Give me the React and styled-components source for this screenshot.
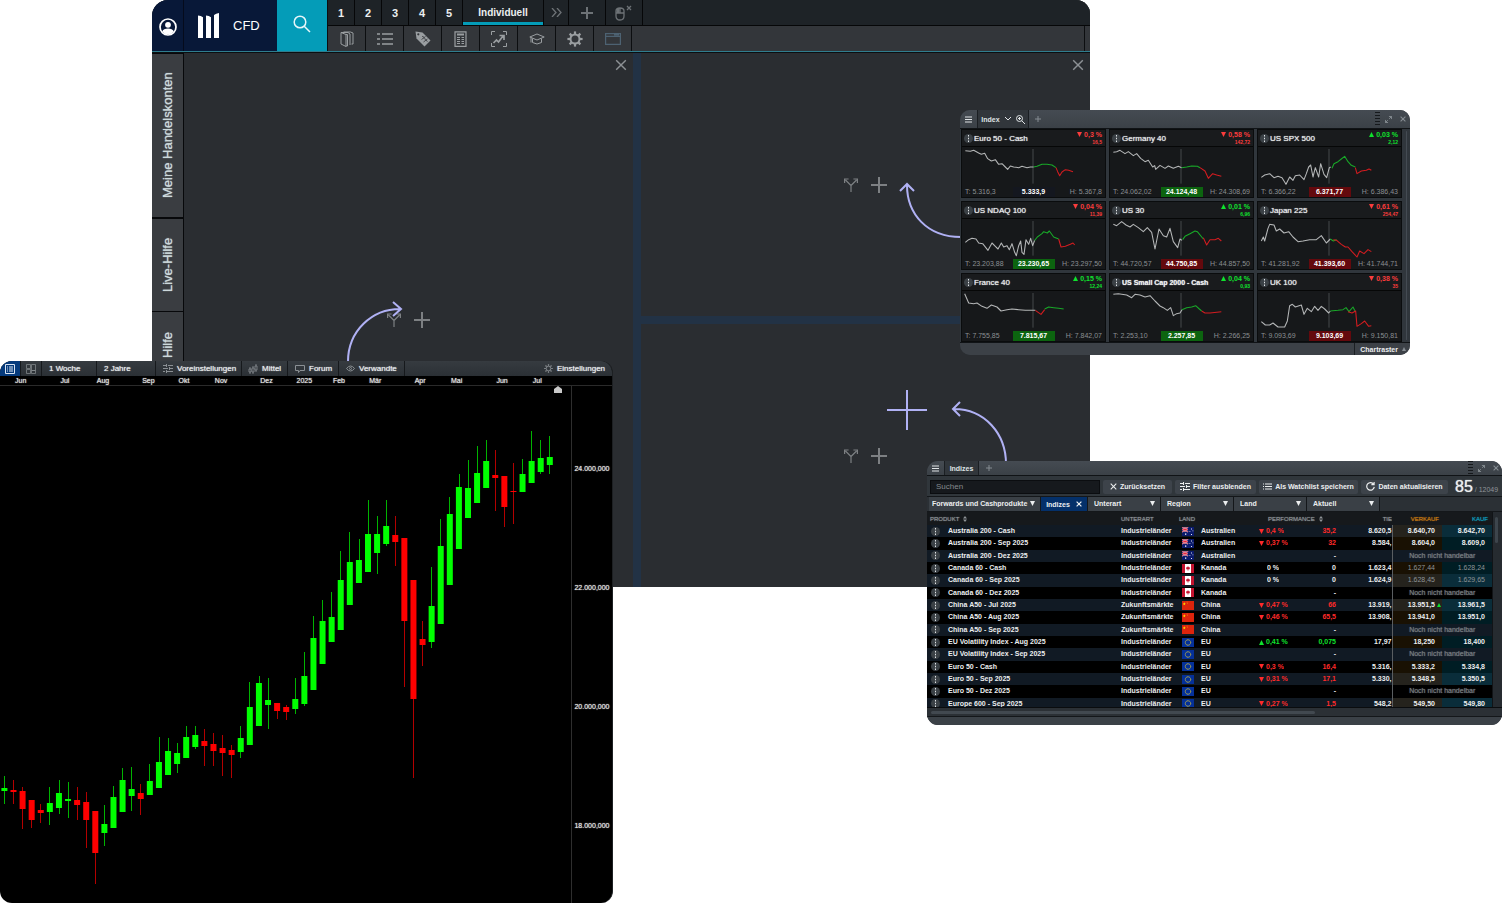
import React from "react";
import styled, { createGlobalStyle, css } from "styled-components";

const Global = createGlobalStyle`
  *, *::before, *::after { box-sizing: border-box; }
  body { margin: 0; background: #fff; font-family: "Liberation Sans", Arial, sans-serif; }
  button, input, select { font: inherit; color: inherit; margin: 0; padding: 0; border: 0; background: none; }
  button { cursor: pointer; }
  svg { display: block; flex: none; }
  a { color: inherit; text-decoration: none; }
`;

const soft = css`text-shadow: 0 0 1px currentColor;`;

const Desktop = styled.main`
  position: relative;
  min-height: 903px;
  min-width: 1200px;
  overflow: hidden;
`;

/* ---------- platform window ---------- */

const Platform = styled.section`
  position: absolute;
  top: 0;
  left: 152px;
  right: 412px;
  height: 587px;
  display: flex;
  flex-direction: column;
  overflow: hidden;
  border-radius: 16px 14px 0 0;
  background: #2a2d31;
`;

const TopBar = styled.header`
  display: flex;
  height: 53px;
  flex: none;
  background: #33363a;
  border-bottom: 1px solid #0c0e10;
  box-shadow: inset 0 -1px 0 #2f7d8e;
  padding-bottom: 1px;
`;

const Account = styled.button`
  width: 32px;
  display: grid;
  place-items: center;
  background: #081838;
  color: #fff;
  border-right: 1px solid #050b1c;
  padding-top: 3px;
`;

const Brand = styled.a`
  width: 93px;
  display: flex;
  align-items: center;
  gap: 14px;
  padding-left: 14px;
  background: #081838;
  color: #fff;
  font-size: 13px;
`;

const SearchButton = styled.button`
  width: 50px;
  display: grid;
  place-items: center;
  padding-bottom: 4px;
  background: #049cb8;
  color: #e6f6f9;
`;

const Bars = styled.div`
  flex: 1;
  min-width: 0;
  display: flex;
  flex-direction: column;
  border-left: 1px solid #0c0e10;
`;

const TabRow = styled.nav`
  display: flex;
  height: 26px;
  background: #1e2327;
  border-bottom: 1px solid #060708;
`;

const Tab = styled.button`
  width: ${(p) => p.$w}px;
  display: grid;
  place-items: center;
  font-size: ${(p) => (p.$active ? 10 : 11)}px;
  font-weight: 700;
  color: ${(p) => (p.$muted ? "#6d7276" : "#eceff0")};
  border-right: 1px solid #060708;
  box-shadow: ${(p) => (p.$active ? "inset 0 -3px 0 #049cb8" : "none")};
`;

const ToolRow = styled.div`
  display: flex;
  height: 25px;
  margin-right: 5px;
  border-right: 1px solid #0c0e10;
`;

const Tool = styled.button`
  width: 38px;
  display: grid;
  place-items: center;
  color: ${(p) => (p.$dim ? "#4d6272" : "#9a9ea1")};
  border-right: 1px solid #0c0e10;
`;

const Work = styled.div`
  flex: 1;
  display: flex;
  min-height: 0;
`;

const Rail = styled.nav`
  width: 32px;
  flex: none;
  display: flex;
  flex-direction: column;
  background: #3a3d41;
  border-right: 1px solid #07080a;
`;

const RailTab = styled.button`
  height: ${(p) => p.$h}px;
  writing-mode: vertical-rl;
  transform: rotate(180deg);
  font-size: 13px;
  color: #cdd9dc;
  text-align: ${(p) => (p.$end ? "right" : "center")};
  border-bottom: ${(p) => (p.$end ? "0" : "1px solid #07080a")};
  border-top: 1px solid #07080a;
  padding-bottom: ${(p) => (p.$end ? 20 : 0)}px;
  ${soft}
`;

const Panes = styled.div`
  flex: 1;
  display: grid;
  grid-template-columns: 1fr 8px 1fr;
  grid-template-rows: 1fr 8px 1fr;
  background: #223245;
`;

const Pane = styled.div`
  position: relative;
  display: flex;
  align-items: center;
  justify-content: center;
  gap: 13px;
  background: #2a2d31;
  color: #7d8083;
  grid-column: ${(p) => p.$col};
  grid-row: ${(p) => p.$row};
`;

const PaneButton = styled.button`
  display: grid;
  place-items: center;
`;

const PaneClose = styled.button`
  position: absolute;
  top: 6px;
  right: 6px;
  color: #8d9195;
`;

const Hint = styled.div`
  position: absolute;
  color: #b0b1f4;
  pointer-events: none;
  ${(p) => p.$place};
`;

/* ---------- shared floating-window parts ---------- */

const Caption = styled.header`
  display: flex;
  align-items: stretch;
  height: ${(p) => p.$h}px;
  flex: none;
  background: linear-gradient(#454b52, #3b4147);
  border-bottom: 1px solid #101316;
  color: #e8ebed;
  font-size: 7px;
  font-weight: 700;
`;

const CaptionButton = styled.button`
  width: ${(p) => p.$w || 20}px;
  display: flex;
  align-items: center;
  justify-content: center;
  gap: 5px;
  color: ${(p) => (p.$muted ? "#858c92" : "#dfe3e5")};
  background: ${(p) => (p.$on ? "#31363b" : "transparent")};
  border-right: ${(p) => (p.$line ? "1px solid #1b1f23" : "0")};
`;

const Push = styled.span`
  margin-left: auto;
`;

const Grip = styled.span`
  width: 5px;
  height: 14px;
  align-self: center;
  background: repeating-linear-gradient(#16191c 0 1px, transparent 1px 3px);
`;

const Dots = styled.button`
  width: 9px;
  height: 9px;
  flex: none;
  display: grid;
  place-items: center;
  border-radius: 50%;
  background: #3b4146;
  color: #dfe3e5;
`;

/* ---------- candle chart window ---------- */

const ChartWindow = styled.section`
  position: absolute;
  left: 0;
  top: 361px;
  width: 613px;
  display: flex;
  flex-direction: column;
  overflow: hidden;
  border-radius: 12px;
  background: #000;
  border-right: 1px solid #1d2023;
`;

const ChartBar = styled.div`
  display: flex;
  height: 15px;
  background: linear-gradient(#363b40, #2b3035);
  color: #e9ecee;
  font-size: 8px;
`;

const ChartButton = styled.button`
  width: ${(p) => p.$w}px;
  display: flex;
  align-items: center;
  gap: 4px;
  padding-left: ${(p) => p.$pad || 6}px;
  background: ${(p) => (p.$on ? "#053a7c" : "transparent")};
  border-right: ${(p) => (p.$last ? "0" : "1px solid #16191c")};
  margin-left: ${(p) => (p.$last ? "auto" : "0")};
  white-space: nowrap;
  ${soft}
  svg { color: ${(p) => (p.$on ? "#d9e4f2" : "#8b9094")}; }
`;

const Months = styled.div`
  display: flex;
  height: 10px;
  padding: 0 52px 0 15px;
  border-bottom: 1px solid #2a2a2a;
  color: #e4e4e4;
  font-size: 7px;
  line-height: 9px;
`;

const Month = styled.span`
  flex: ${(p) => p.$weeks} 0 0;
  min-width: 0;
  ${soft}
`;

const Plot = styled.div`
  display: flex;
  height: 517px;
`;

const Prices = styled.div`
  flex: 1;
  padding-top: 23px;
  border-left: 1px solid #2e2e2e;
  color: #e4e4e4;
  font-size: 7px;
  line-height: 119px;
  text-align: center;
  ${soft}
`;

/* ---------- index grid window ---------- */

const IndexWindow = styled.section`
  position: absolute;
  right: 92px;
  top: 110px;
  width: 450px;
  display: flex;
  flex-direction: column;
  overflow: hidden;
  border-radius: 10px;
  background: #30363c;
`;

const Tiles = styled.div`
  display: grid;
  grid-template-columns: repeat(3, 1fr);
  gap: 3px;
  padding: 0 4px 0 1px;
  flex: 1;
`;

const TilesScroll = styled.div`
  display: flex;
  border-bottom: 1px solid #101316;
  padding-right: 3px;
`;

const ScrollTrack = styled.span`
  width: 3px;
  margin: 2px 0;
  border-radius: 2px;
  background: #444b53;
`;

const Tile = styled.article`
  display: flex;
  flex-direction: column;
  height: 69px;
  background: #16181a;
  border: 1px solid #0a0c0d;
`;

const TileHead = styled.div`
  display: flex;
  align-items: center;
  height: 17px;
  gap: 1px;
  padding: 0 3px 0 2px;
  background: #191b1d;
  border-bottom: 1px solid #060707;
`;

const TileName = styled.h3`
  margin: 0;
  font-size: ${(p) => (p.$long ? 7 : 8)}px;
  font-weight: ${(p) => (p.$long ? 700 : 400)};
  color: #eceeef;
  white-space: nowrap;
  ${soft}
`;

const Change = styled.div`
  margin-left: auto;
  text-align: right;
  font-weight: 700;
  font-size: 7px;
  line-height: 8px;
  color: ${(p) => (p.$up ? "#0fe22d" : "#fb3c3c")};
  white-space: nowrap;
  small { display: block; font-size: 5px; line-height: 6px; }
  svg { display: inline-block; }
`;

const TileFoot = styled.div`
  display: grid;
  grid-template-columns: 1fr 42px 1fr;
  height: 10px;
  line-height: 10px;
  padding: 0 3px;
  font-size: 7px;
  color: #8b8f92;
  white-space: nowrap;
  span:last-child { display: flex; justify-content: flex-end; }
`;

const Price = styled.button`
  color: #fff;
  font-weight: 700;
  line-height: 10px;
  background: ${(p) => ({ flat: "#14171f", up: "#0c640f", down: "#64090d" })[p.$tone]};
`;

const IndexFoot = styled.footer`
  display: flex;
  justify-content: flex-end;
  height: 12px;
  background: #3c4147;
  color: #eceeef;
  font-size: 7px;
  font-weight: 700;
`;

const FootButton = styled.button`
  display: flex;
  align-items: center;
  gap: 4px;
  padding: 0 4px 0 5px;
  border-left: 1px solid #1b1f23;
  svg { color: #858c92; }
`;

/* ---------- product table window ---------- */

const TableWindow = styled.section`
  position: absolute;
  right: 0;
  top: 461px;
  width: 575px;
  display: flex;
  flex-direction: column;
  overflow: hidden;
  border-radius: 11px;
  background: #30363b;
  color: #eceeef;
  font-size: 7px;
  font-weight: 700;
`;

const SearchRow = styled.div`
  display: flex;
  align-items: center;
  gap: 3px;
  height: 20px;
  padding: 1px 3px 0;
`;

const SearchInput = styled.input`
  flex: 1;
  min-width: 0;
  height: 14px;
  padding: 0 5px;
  background: #16191d;
  border: 1px solid #0b0d10;
  font-size: 8px;
  font-weight: 400;
  &::placeholder { color: #858a8e; opacity: 1; }
`;

const Action = styled.button`
  display: flex;
  align-items: center;
  justify-content: center;
  gap: 3px;
  width: ${(p) => p.$w}px;
  height: 14px;
  border-radius: 2px;
  background: #3d434a;
  white-space: nowrap;
`;

const Count = styled.p`
  width: 48px;
  margin: 0;
  padding-left: 4px;
  font-weight: 400;
  white-space: nowrap;
  strong { font-size: 16px; font-weight: 400; line-height: 16px; ${soft} }
  span { color: #8f9498; }
`;

const FilterRow = styled.div`
  display: flex;
  height: 16px;
  padding-left: 2px;
  background: #2b3035;
  border-top: 1px solid #14171a;
  border-bottom: 1px solid #14171a;
`;

const Filter = styled.label`
  position: relative;
  width: ${(p) => p.$w}px;
  display: flex;
  align-items: center;
  background: #3a4046;
  border-right: 1px solid #14171a;
  select {
    width: 100%;
    height: 13px;
    padding-left: ${(p) => p.$pad}px;
    padding-bottom: 1px;
    appearance: none;
    outline: 0;
  }
  svg { position: absolute; right: 5px; top: 4px; pointer-events: none; }
`;

const FilterChip = styled.button`
  width: 47px;
  display: flex;
  align-items: center;
  justify-content: center;
  gap: 6px;
  background: #04306a;
  border-right: 1px solid #14171a;
`;

const TableScroll = styled.div`
  display: flex;
  height: 196px;
  overflow: hidden;
  background: #1e2226;
  border-bottom: 1px solid #0a0c0e;
`;

const TableClip = styled.div`
  flex: 1;
  overflow: hidden;
`;

const Table = styled.table`
  width: 100%;
  height: 198px;
  table-layout: fixed;
  border-collapse: collapse;
  line-height: 8px;
  white-space: nowrap;

  th {
    height: 13px;
    padding: 0;
    background: #16191c;
    color: #8d9296;
    font-size: 6px;
    font-weight: 400;
    text-align: left;
    ${soft}
  }
  td { padding: 0; }
  tbody tr:nth-child(odd) { background: #111a24; }
  tbody tr:nth-child(even) { background: #000; }
`;

const Col = styled.col`
  width: ${(p) => p.$w}px;
`;

const Cell = styled.div`
  display: flex;
  align-items: center;
  justify-content: ${(p) => p.$justify || "flex-start"};
  gap: ${(p) => p.$gap || 0}px;
  padding: 0 ${(p) => p.$r || 0}px 0 ${(p) => p.$l || 0}px;
  color: ${(p) => p.$color || "inherit"};
  font-weight: ${(p) => (p.$thin ? 400 : 700)};
  overflow: hidden;
`;

const Sell = styled.td`
  background: rgba(90, 60, 10, 0.28);
  border-left: 1px solid #5a5e61;
`;

const Buy = styled.td`
  background: rgba(0, 75, 95, 0.38);
`;

const Closed = styled.td`
  border-left: 1px solid #5a5e61;
  text-align: center;
  color: #777c80;
  font-weight: 400;
  font-size: 7px;
  ${soft}
`;

const VBar = styled.div`
  width: 10px;
  padding: 5px 2px;
  background: #262b30;
  border-left: 1px solid #111417;
  &::before { content: ""; display: block; height: 26px; width: 3px; border-radius: 2px; background: #3d454c; }
`;

const HBar = styled.div`
  height: 9px;
  padding: 3px 4px;
  background: #2b3035;
  border-bottom: 1px solid #14171a;
  &::before { content: ""; display: block; width: 384px; height: 3px; border-radius: 2px; background: #424950; }
`;

const TableFoot = styled.footer`
  height: 8px;
  background: #3b4147;
`;

/* ---------- icons ---------- */

const Icon = ({ w = 16, h = w, vb, sw = 1, children }) => (
  <svg width={w} height={h} viewBox={vb || `0 0 ${w} ${h}`} fill="none" stroke="currentColor" strokeWidth={sw} aria-hidden="true">
    {children}
  </svg>
);

const Cross = ({ size = 10, sw = 1 }) => (
  <Icon w={size} vb="0 0 10 10" sw={sw}><path d="M1 1l8 8M9 1l-8 8" /></Icon>
);
const Plus = ({ size = 16, sw = 2 }) => (
  <Icon w={size} sw={sw}><path d={`M${size / 2} 0V${size}M0 ${size / 2}H${size}`} /></Icon>
);
const Fork = () => (
  <Icon w={14} h={14} sw={1.2}>
    <path d="M7 14V7.500L1.500 2M7 7.500L12.500 2M.6 5V1H4.600M9.400 1h4v4" />
  </Icon>
);
const Burger = ({ size = 7 }) => (
  <Icon w={size} vb="0 0 7 7"><path d="M0 1h7M0 3.500h7M0 6h7" /></Icon>
);
const Tri = ({ up, w = 5, h = 5 }) => (
  <svg width={w} height={h} viewBox="0 0 6 6" fill="currentColor" aria-hidden="true">
    <path d={up ? "M3 0L6 6H0Z" : "M0 0H6L3 6Z"} />
  </svg>
);
const DotsIcon = () => (
  <svg width="3" height="7" viewBox="0 0 3 7" fill="currentColor" aria-hidden="true">
    <path d="M1 0h1v1.500H1zM1 2.800h1v1.400H1zM1 5.500h1V7H1z" />
  </svg>
);
const Sliders = ({ w = 10 }) => (
  <Icon w={w} h={9} vb="0 0 10 9"><path d="M0 1.500h3M5 1.500h5M0 4.500h5M7 4.500h3M0 7.500h2M4 7.500h6M3.500 0v3M6.500 3v3M3.500 6v3" /></Icon>
);
const Expand = () => (
  <Icon w={7} vb="0 0 8 8" sw={1.1}><path d="M4.800 3.200L7.500.5M4.500 .5h3V3.500M3.200 4.800L.5 7.500M.5 4.500v3h3" /></Icon>
);
const Sort = () => (
  <svg width="4" height="6" viewBox="0 0 4 6" fill="currentColor" aria-hidden="true"><path d="M2 0l2 2.500H0zM2 6l2-2.500H0z" /></svg>
);
const Gear = ({ w = 16, teeth = 8, r = 5, sw = 1.6 }) => (
  <Icon w={w} vb="0 0 16 16" sw={sw}>
    <circle cx="8" cy="8" r={r} />
    {Array.from({ length: teeth }, (_, i) => (
      <path key={i} d="M8 3.200V.4" strokeWidth="2.200" transform={`rotate(${(i * 360) / teeth} 8 8)`} />
    ))}
  </Icon>
);

const toolIcons = [
  ["Produkte", <Icon w={14} h={16}><path d="M1 1.500l5 2v12l-5-2.500zM1 1.500h7l2 1.500v11M3.500 1h7l2.500 1v11h-1.500M6 3.500h1.500v11.500H6" /></Icon>],
  ["Listen", <Icon w={16} h={14} sw={1.500}><path d="M5 2h11M5 7h11M5 12h11M0 2h3M0 7h3M0 12h3" /></Icon>],
  ["Preise", <svg width="16" height="16" viewBox="0 0 16 16" aria-hidden="true"><path fill="currentColor" d="M.5.5l7 1 8 8-6 6-8-8z" /><circle cx="3.300" cy="3.300" r="1.100" fill="#33363a" /><path d="M7 5.500c3-.5 1 2.500 3 2.500s1 2.500 2.500 2.500M6.500 8.500l4-3M8.500 11l4-3" stroke="#33363a" strokeWidth=".8" fill="none" /></svg>],
  ["Berichte", <Icon w={13} h={16} sw={1.200}><path d="M1 .8h11v14.500H1zM3 6.500h3M7.500 6.500H10M3 8.500h3M7.500 8.500H10M3 10.500h3M7.500 10.500H10M3 12.500h3M7.500 12.500H10" /><path d="M3 3.500h7" strokeWidth="2" /></Icon>],
  ["Charts", <Icon w={16}><path d="M.5 4V.5H4M12 .5h3.500V4M15.500 12v3.500H12M4 15.500H.5V12" /><path d="M2.500 12l3-3 2 2L12 5M8.500 4.500H13V9" strokeWidth="1.700" /></Icon>],
  ["Wissen", <Icon w={16} h={12}><path d="M8 1L.8 4 8 7l7.200-3zM3.500 5.500v4q4.500 3 9 0v-4M2 4.500v5" /></Icon>],
  ["Einstellungen", <Gear r={4.5} sw={2} />],
  ["Fenster", <Icon w={16} h={12} sw={1.200}><path d="M.6.6h14.800v10.800H.6zM.6 3.300h14.800M9 1.800h5" /></Icon>],
];

/* ---------- data ---------- */

const months = [
  ["Jun", 5], ["Jul", 4], ["Aug", 5], ["Sep", 4], ["Okt", 4], ["Nov", 5], ["Dez", 4],
  ["2025", 4], ["Feb", 4], ["Mär", 5], ["Apr", 4], ["Mai", 5], ["Jun", 4], ["Jul", 3],
];

/* rising flag, high, body top, body bottom, low */
const candles = [
  [1, 390, 402, 405, 418], [0, 394, 404, 406, 418], [0, 401, 405, 423, 443], [0, 414, 414, 434, 442],
  [0, 418, 424, 427, 437], [1, 401, 417, 426, 439], [1, 394, 407, 422, 428], [1, 396, 413, 415, 432],
  [0, 401, 414, 419, 434], [0, 406, 416, 434, 462], [0, 425, 425, 467, 498], [1, 419, 438, 447, 460],
  [1, 400, 411, 442, 442], [1, 382, 394, 426, 426], [1, 381, 403, 410, 425], [0, 398, 407, 413, 429],
  [1, 378, 395, 409, 409], [1, 351, 376, 402, 402], [1, 352, 365, 389, 389], [1, 357, 367, 378, 387],
  [1, 340, 351, 372, 372], [1, 340, 349, 361, 363], [0, 343, 355, 360, 380], [0, 347, 358, 365, 380],
  [0, 349, 362, 367, 390], [0, 359, 364, 369, 392], [1, 340, 352, 366, 372], [1, 296, 321, 359, 359],
  [1, 290, 297, 340, 340], [1, 292, 314, 319, 343], [0, 317, 317, 325, 333], [0, 319, 321, 326, 334],
  [1, 292, 313, 323, 328], [1, 266, 290, 318, 320], [1, 230, 252, 304, 304], [1, 214, 235, 278, 278],
  [1, 206, 231, 256, 256], [1, 165, 194, 244, 244], [1, 146, 176, 219, 219], [1, 153, 174, 197, 197],
  [1, 114, 148, 186, 186], [1, 130, 148, 167, 188], [1, 114, 140, 158, 160], [0, 130, 149, 156, 180],
  [0, 152, 152, 235, 301], [0, 194, 194, 313, 392], [0, 235, 253, 259, 280], [1, 181, 220, 256, 262],
  [1, 133, 160, 238, 238], [1, 111, 128, 199, 199], [1, 88, 101, 163, 163], [1, 74, 102, 132, 132],
  [1, 60, 87, 117, 117], [1, 54, 75, 102, 102], [0, 64, 89, 92, 125], [0, 90, 90, 121, 141],
  [0, 77, 105, 106, 138], [1, 73, 88, 106, 106], [1, 45, 75, 97, 97], [1, 54, 72, 86, 88], [1, 50, 71, 79, 88],
];

const tiles = [
  { name: "Euro 50 - Cash", pct: "0,3 %", abs: "16,5", low: "5.316,3", price: "5.333,9", high: "5.367,8", tone: "flat",
    lines: ["10,11 25,13 35,10 50,18 58,22 68,19 77,35 88,42 100,38 110,52 120,50 130,60 137,67 145,57 155,60 170,62 180,58 195,62 205,60 215,60", "215,60 225,58 240,52 255,52 270,54 282,62", "282,62 287,74 293,86 300,75 310,68 320,70 333,74"] },
  { name: "Germany 40", pct: "0,58 %", abs: "142,72", low: "24.062,02", price: "24.124,48", high: "24.308,69", tone: "up",
    lines: ["10,16 20,14 30,10 45,20 55,14 70,26 80,20 92,34 105,44 115,40 128,60 134,56 137,67 150,55 165,64 175,57 190,64 205,58 215,62", "215,62 230,60 245,57 262,58 270,62", "270,62 285,72 295,94 308,80 320,84 334,88"] },
  { name: "US SPX 500", up: 1, pct: "0,03 %", abs: "2,12", low: "6.366,22", price: "6.371,77", high: "6.386,43", tone: "down",
    lines: ["10,91 20,84 35,80 48,92 60,88 72,92 84,112 95,90 105,100 112,86 125,84 138,98 145,80 152,60 158,54 165,90 172,62 182,90 188,50 198,82 206,92 214,62 218,60", "222,64 228,50 240,44 250,36 260,28 270,44 280,55 292,60", "292,62 297,80 310,72 325,70 333,66 340,70"] },
  { name: "US NDAQ 100", pct: "0,04 %", abs: "11,39", low: "23.203,88", price: "23.230,65", high: "23.297,50", tone: "up",
    lines: ["10,70 20,62 30,58 42,60 50,72 62,74 78,94 90,72 100,82 108,90 118,72 125,84 135,80 142,92 150,74 158,100 163,110 170,80 176,66 180,100 186,106 192,62 200,76 206,58 212,80 218,64", "218,64 226,54 240,44 245,38 256,42 262,36 275,54 290,60", "290,60 297,84 310,82 325,76 333,72 338,78"] },
  { name: "US 30", up: 1, pct: "0,01 %", abs: "6,96", low: "44.720,57", price: "44.750,85", high: "44.857,50", tone: "down",
    lines: ["10,16 20,20 35,8 48,18 60,24 70,16 85,26 100,38 112,26 125,40 135,90 147,30 160,50 170,54 180,28 190,68 203,86 210,60 216,64", "218,62 225,52 240,44 255,36 262,38 280,60", "280,56 290,78 300,62 315,62 325,58 334,66"] },
  { name: "Japan 225", pct: "0,61 %", abs: "254,47", low: "41.281,92", price: "41.393,60", high: "41.744,71", tone: "down",
    lines: ["10,66 16,54 20,66 30,28 35,16 48,18 55,36 65,30 78,42 92,38 105,54 120,68 135,66 155,62 175,62 190,50 205,72 217,60", "217,60 226,66 236,62", "226,62 236,64 250,76 262,84 270,84 282,98 297,114 305,96 318,104 330,92 340,98"] },
  { name: "France 40", up: 1, pct: "0,15 %", abs: "12,24", low: "7.755,85", price: "7.815,67", high: "7.842,07", tone: "up",
    lines: ["8,8 20,36 35,38 45,36 60,46 75,52 88,42 105,48 117,60 135,56 150,54 170,56 190,58 210,58 220,58", "248,54 260,48 275,50 290,52 305,54", "220,58 237,70 248,56"] },
  { name: "US Small Cap 2000 - Cash", long: 1, up: 1, pct: "0,04 %", abs: "0,93", low: "2.253,10", price: "2.257,85", high: "2.266,25", tone: "up",
    lines: ["10,10 25,8 50,12 65,20 75,10 90,12 105,18 120,14 135,30 150,45 160,50 172,58 182,50 190,74 200,68 210,66 216,56", "216,56 230,50 245,48 257,44 268,54 275,60", "275,60 285,66 300,66 334,62"] },
  { name: "UK 100", pct: "0,38 %", abs: "35", low: "9.093,69", price: "9.103,69", high: "9.150,81", tone: "down",
    lines: ["10,92 22,102 35,102 45,96 60,108 80,108 88,90 95,44 103,40 112,48 130,42 138,70 148,52 160,62 170,46 180,58 190,46 200,54 212,66 217,60", "217,60 240,58 255,56 264,50 273,62 285,48 291,60", "270,62 282,66 293,60 297,106 310,98 320,90 332,106 340,104"] },
];

const IND = "Industrieländer";
const ZUK = "Zukunftsmärkte";
/* product, category, country, change %, change, low, sell, buy, direction */
const products = [
  ["Australia 200 - Cash", IND, "Australien", "0,4 %", "35,2", "8.620,5", "8.640,70", "8.642,70", -1],
  ["Australia 200 - Sep 2025", IND, "Australien", "0,37 %", "32", "8.584,", "8.604,0", "8.609,0", -1],
  ["Australia 200 - Dez 2025", IND, "Australien"],
  ["Canada 60 - Cash", IND, "Kanada", "0 %", "0", "1.623,4", "1.627,44", "1.628,24", 0],
  ["Canada 60 - Sep 2025", IND, "Kanada", "0 %", "0", "1.624,9", "1.628,45", "1.629,65", 0],
  ["Canada 60 - Dez 2025", IND, "Kanada"],
  ["China A50 - Jul 2025", ZUK, "China", "0,47 %", "66", "13.919,", "13.951,5", "13.961,5", -1],
  ["China A50 - Aug 2025", ZUK, "China", "0,46 %", "65,5", "13.908,", "13.941,0", "13.951,0", -1],
  ["China A50 - Sep 2025", ZUK, "China"],
  ["EU Volatility Index - Aug 2025", IND, "EU", "0,41 %", "0,075", "17,97", "18,250", "18,400", 1],
  ["EU Volatility Index - Sep 2025", IND, "EU"],
  ["Euro 50 - Cash", IND, "EU", "0,3 %", "16,4", "5.316,", "5.333,2", "5.334,8", -1],
  ["Euro 50 - Sep 2025", IND, "EU", "0,31 %", "17,1", "5.330,", "5.348,5", "5.350,5", -1],
  ["Euro 50 - Dez 2025", IND, "EU"],
  ["Europe 600 - Sep 2025", IND, "EU", "0,27 %", "1,5", "548,2", "549,50", "549,80", -1],
];

const flagArt = {
  Australien: (
    <>
      <path fill="#0a1a6c" d="M0 0h12v9H0z" />
      <path stroke="#fff" strokeWidth="1.200" d="M0 0l6 5M6 0L0 5M3 0v5M0 2.500h6" />
      <path stroke="#e0243b" strokeWidth=".8" d="M0 0l6 5M6 0L0 5M3 0v5M0 2.500h6" />
      <path fill="#fff" d="M3 6.500h1.300v1.300H3zM9 1.500h.9v.9H9zM7.500 4h.8v.8h-.8zM10.500 3.500h.8v.8h-.8zM9 7h.9v.9H9z" />
    </>
  ),
  Kanada: (
    <>
      <path fill="#fff" d="M0 0h12v9H0z" />
      <path fill="#c4132f" d="M0 0h3v9H0zM9 0h3v9H9zM6 2l.7 1.200L8 3.500 7.600 5.200 6.200 5.600V7h-.4V5.600L4.400 5.200 4 3.500l1.300-.3z" />
    </>
  ),
  China: (
    <>
      <path fill="#dc240c" d="M0 0h12v9H0z" />
      <path fill="#ffd100" d="M2.300 1.200l.5 1 1 .2-.8.700.2 1.100-.9-.5-.9.500.2-1.100-.8-.7 1-.2zM4.800.8h.6v.6h-.6zM5.300 2.500h.6v.6h-.6z" />
    </>
  ),
  EU: (
    <>
      <path fill="#043099" d="M0 0h12v9H0z" />
      <circle cx="6" cy="4.500" r="2.700" fill="none" stroke="#e6cf2e" strokeWidth=".9" strokeDasharray="1 .41" />
    </>
  ),
};
const Flag = ({ of }) => <svg width="12" height="9" viewBox="0 0 12 9" aria-hidden="true">{flagArt[of]}</svg>;

/* ---------- windows ---------- */

function EmptyPane({ col, row, closable, children }) {
  return (
    <Pane $col={col} $row={row}>
      {closable && <PaneClose aria-label="Bereich schließen"><Cross size={12} sw={1.2} /></PaneClose>}
      <PaneButton aria-label="Bereich teilen"><Fork /></PaneButton>
      <PaneButton aria-label="Fenster hinzufügen"><Plus /></PaneButton>
      {children}
    </Pane>
  );
}

function PlatformWindow() {
  return (
    <Platform>
      <TopBar>
        <Account aria-label="Konto">
          <svg width="18" height="18" viewBox="0 0 18 18" aria-hidden="true">
            <circle cx="9" cy="9" r="8" fill="none" stroke="currentColor" strokeWidth="1.700" />
            <circle cx="9" cy="6.800" r="2.900" fill="currentColor" />
            <path d="M3.200 13.500c1-4 10.600-4 11.600 0A7.500 7.500 0 0 1 3.200 13.500z" fill="currentColor" />
          </svg>
        </Account>
        <Brand href="#cfd">
          <svg width="21" height="25" viewBox="0 0 21 25" fill="currentColor" aria-hidden="true">
            <path d="M0 2.500q3 .2 5 1.700V25H0zM8 2.500q3 .2 5 1.700V25H8zM16 2q2-1.700 5-2v25h-5z" />
          </svg>
          CFD
        </Brand>
        <SearchButton aria-label="Suchen">
          <Icon w={18} sw={1.500}><circle cx="7" cy="7" r="5.800" /><path d="M11.200 11.200L17 17" /></Icon>
        </SearchButton>
        <Bars>
          <TabRow>
            {["1", "2", "3", "4", "5"].map((t) => <Tab key={t} $w={27}>{t}</Tab>)}
            <Tab $w={81} $active>Individuell</Tab>
            <Tab $w={25} $muted aria-label="Mehr"><Icon w={11} h={9} sw={1.3}><path d="M1 0l4 4.500L1 9M6 0l4 4.500L6 9" /></Icon></Tab>
            <Tab $w={37} $muted aria-label="Tab hinzufügen"><Plus size={12} sw={2} /></Tab>
            <Tab $w={37} $muted aria-label="Maus">
              <Icon w={18} h={16} sw={1.300}><path d="M1 8V6q0-3 4-3t4 3v5q0 4-4 4t-4-4V8h8M5 3v5M12 1l4 4M16 1l-4 4" /><path d="M1.500 4h3v4h-3z" fill="currentColor" stroke="none" /></Icon>
            </Tab>
          </TabRow>
          <ToolRow>
            {toolIcons.map(([label, icon]) => <Tool key={label} aria-label={label} $dim={label === "Fenster"}>{icon}</Tool>)}
          </ToolRow>
        </Bars>
      </TopBar>
      <Work>
        <Rail>
          <RailTab $h={165}>Meine Handelskonten</RailTab>
          <RailTab $h={94}>Live-Hilfe</RailTab>
          <RailTab $h={275} $end>Hilfe</RailTab>
        </Rail>
        <Panes>
          <EmptyPane col="1" row="1 / 4" closable>
            <Hint $place="left: calc(50% - 64px); top: calc(50% - 20px)">
              <Icon w={60} h={64} sw={2}><path d="M3 64C2 30 28 9 55 9M48 2l8 7-8 7" /></Icon>
            </Hint>
          </EmptyPane>
          <EmptyPane col="3" row="1" closable>
            <Hint $place="right: 129px; top: 129px">
              <Icon w={62} h={58} sw={2}><path d="M8 3C8 32 28 55 62 55M1 9l7-7 7 7" /></Icon>
            </Hint>
          </EmptyPane>
          <EmptyPane col="3" row="3">
            <Hint $place="right: 163px; top: 66px"><Plus size={40} /></Hint>
            <Hint $place="right: 79px; top: 76px">
              <Icon w={60} h={64} sw={2}><path d="M3 9C34 9 55 34 55 64M9 2L2 9l7 7" /></Icon>
            </Hint>
          </EmptyPane>
        </Panes>
      </Work>
    </Platform>
  );
}

function CandleChart() {
  return (
    <ChartWindow>
      <ChartBar>
        <ChartButton $w={21} $pad={5} $on aria-label="Einzelansicht"><Icon w={10}><path d="M.5.5h9v9h-9zM2 3h1M4 3h4M2 5h1M4 5h4M2 7h1M4 7h4" /></Icon></ChartButton>
        <ChartButton $w={21} $pad={5} aria-label="Rasteransicht"><Icon w={10}><path d="M.5.5h4v4h-4zM5.500.5h4v6h-4zM.5 5.500h4v4h-4zM5.500 6.500h4v3h-4z" strokeWidth=".7" /></Icon></ChartButton>
        <ChartButton $w={55} $pad={7}>1 Woche</ChartButton>
        <ChartButton $w={59} $pad={7}>2 Jahre</ChartButton>
        <ChartButton $w={86} $pad={7}><Sliders />Voreinstellungen</ChartButton>
        <ChartButton $w={46}><Icon w={10}><path d="M1 5h2v3H1zM4 4h2v4H4zM7 2h2v4H7zM2 3v2M2 8v2M5 2v2M5 8v2M8 0v2M8 6v2" strokeWidth=".8" /></Icon>Mittel</ChartButton>
        <ChartButton $w={51} $pad={7}><Icon w={10} h={8}><path d="M.5.5h9v5H5L3.500 7.500v-2h-3z" /></Icon>Forum</ChartButton>
        <ChartButton $w={66} $pad={7}><Icon w={9} h={7}><path d="M.5 3.500q4-5 8 0-4 5-8 0z" /><circle cx="4.500" cy="3.500" r="1" /></Icon>Verwandte</ChartButton>
        <ChartButton $w={69} $pad={1} $last><Gear w={9} r={4} sw={1.500} />Einstellungen</ChartButton>
      </ChartBar>
      <Months>
        {months.map(([m, weeks], i) => <Month key={i} $weeks={weeks}>{m}</Month>)}
      </Months>
      <Plot>
        <svg width="571" height="517" viewBox="0 0 571 517" role="img" aria-label="Kerzenchart">
          {candles.map(([up, high, top, bottom, low], i) => {
            const x = 4 + i * 9.09;
            return (
              <g key={i} fill={up ? "#00ff00" : "#ff0000"}>
                <rect x={Math.round(x)} y={high} width="1" height={low - high} opacity=".7" />
                <rect x={x - 2.600} y={top} width="6" height={bottom - top} />
              </g>
            );
          })}
          <path d="M554 7V3l4-3 4 3v4z" fill="#c9c9c9" />
        </svg>
        <Prices>
          {["24.000,000", "22.000,000", "20.000,000", "18.000,000"].map((p) => <div key={p}>{p}</div>)}
        </Prices>
      </Plot>
    </ChartWindow>
  );
}

function IndexGrid() {
  return (
    <IndexWindow>
      <Caption $h={19}>
        <CaptionButton $w={18} $line aria-label="Menü"><Burger /></CaptionButton>
        <CaptionButton $w={51} $on $line>Index<Icon w={6} h={4}><path d="M0 0l3 3 3-3" /></Icon><Icon w={9}><circle cx="3.500" cy="3.500" r="3" /><path d="M5.700 5.700L9 9M2 3.500h3M3.500 2v3" /></Icon></CaptionButton>
        <CaptionButton $w={17} $muted aria-label="Tab hinzufügen"><Plus size={6} sw={1} /></CaptionButton>
        <Push />
        <Grip />
        <CaptionButton $w={16} $muted aria-label="Vergrößern"><Expand /></CaptionButton>
        <CaptionButton $w={14} $muted aria-label="Schließen"><Cross size={6} sw={1.800} /></CaptionButton>
      </Caption>
      <TilesScroll>
        <Tiles>
          {tiles.map((t) => (
            <Tile key={t.name}>
              <TileHead>
                <Dots aria-label={`Menü ${t.name}`}><DotsIcon /></Dots>
                <TileName $long={t.long}>{t.name}</TileName>
                <Change $up={t.up}><Tri up={t.up} /> {t.pct}<small>{t.abs}</small></Change>
              </TileHead>
              <svg width="143" height="40" viewBox="0 0 429 120" fill="none" strokeWidth="3.200" strokeLinejoin="round" aria-hidden="true">
                <path d="M213 6v104" stroke="#45484b" strokeWidth="3" />
                <polyline points={t.lines[0]} stroke="#b4b6b7" />
                <polyline points={t.lines[1]} stroke="#18a828" />
                <polyline points={t.lines[2]} stroke="#d31c20" />
              </svg>
              <TileFoot>
                <span>T: {t.low}</span>
                <Price $tone={t.tone}>{t.price}</Price>
                <span>H: {t.high}</span>
              </TileFoot>
            </Tile>
          ))}
        </Tiles>
        <ScrollTrack />
      </TilesScroll>
      <IndexFoot>
        <FootButton>Chartraster<Tri up w={4} h={4} /></FootButton>
      </IndexFoot>
    </IndexWindow>
  );
}

function ProductRow({ data }) {
  const [name, kind, country, pct, abs, low, sell, buy, dir] = data;
  const color = dir === -1 ? "#ff2a2a" : dir === 1 ? "#0fe22d" : undefined;
  const frozen = dir === 0 ? "#8f9496" : undefined;
  const ticked = name === "China A50 - Jul 2025";
  return (
    <tr>
      <td><Cell $l={4} $gap={8}><Dots aria-label={`Menü ${name}`}><DotsIcon /></Dots>{name}</Cell></td>
      <td><Cell $l={4}>{kind}</Cell></td>
      <td><Cell $l={7} $gap={7}><Flag of={country} />{country}</Cell></td>
      <td>
        <Cell $l={dir ? 5 : 13} $r={4} $justify="space-between" $color={color}>
          <Cell $gap={2}>{dir ? <Tri up={dir === 1} /> : null}{pct}</Cell>
          <span>{abs || "-"}</span>
        </Cell>
      </td>
      <td><Cell $justify="flex-end">{low}</Cell></td>
      {sell ? (
        <>
          <Sell><Cell $justify="flex-end" $r={ticked ? 1 : 7} $gap={2} $color={frozen} $thin={frozen}>
            {sell}{ticked && <svg width="4" height="4" viewBox="0 0 6 6" fill="#0fe22d" aria-hidden="true"><path d="M3 0l3 6H0z" /></svg>}
          </Cell></Sell>
          <Buy><Cell $justify="flex-end" $r={7} $color={frozen} $thin={frozen}>{buy}</Cell></Buy>
        </>
      ) : (
        <Closed colSpan={2}>Noch nicht handelbar</Closed>
      )}
    </tr>
  );
}

function ProductTable() {
  return (
    <TableWindow>
      <Caption $h={15}>
        <CaptionButton $w={18} $line aria-label="Menü"><Burger /></CaptionButton>
        <CaptionButton $w={34} $on $line>Indizes</CaptionButton>
        <CaptionButton $w={19} $muted aria-label="Tab hinzufügen"><Plus size={6} sw={1} /></CaptionButton>
        <Push />
        <Grip />
        <CaptionButton $w={16} $muted aria-label="Vergrößern"><Expand /></CaptionButton>
        <CaptionButton $w={13} $muted aria-label="Schließen"><Cross size={6} sw={1.800} /></CaptionButton>
      </Caption>
      <SearchRow>
        <SearchInput aria-label="Suchen" placeholder="Suchen" />
        <Action $w={69}><Cross size={7} sw={1.500} />Zurücksetzen</Action>
        <Action $w={81}><Sliders />Filter ausblenden</Action>
        <Action $w={99}><Icon w={9} h={7}><path d="M0 1h1M2 1h7M0 3.500h1M2 3.500h7M0 6h1M2 6h7" /></Icon>Als Watchlist speichern</Action>
        <Action $w={87}><Icon w={9} vb="0 0 10 10" sw={1.300}><path d="M8.500 2.500A4.200 4.200 0 1 0 9.200 5.500M9 0v3H6" /></Icon>Daten aktualisieren</Action>
        <Count><strong>85</strong> <span>/ 12049</span></Count>
      </SearchRow>
      <FilterRow>
        <Filter $w={112} $pad={3}>
          <select aria-label="Produktart"><option>Forwards und Cashprodukte</option></select><Tri />
        </Filter>
        <FilterChip>Indizes<Cross size={6} sw={2} /></FilterChip>
        {["Unterart", "Region", "Land", "Aktuell"].map((f) => (
          <Filter key={f} $w={73} $pad={6}><select aria-label={f}><option>{f}</option></select><Tri /></Filter>
        ))}
      </FilterRow>
      <TableScroll>
        <TableClip>
          <Table>
            <colgroup><col />{[58, 79, 86, 52, 50, 50].map((w, i) => <Col key={i} $w={w} />)}</colgroup>
            <thead>
              <tr>
                <th><Cell $l={3} $gap={4} $thin>PRODUKT<Sort /></Cell></th>
                <th><Cell $l={4} $thin>UNTERART</Cell></th>
                <th><Cell $l={4} $thin>LAND</Cell></th>
                <th><Cell $l={14} $gap={4} $thin>PERFORMANCE<Sort /></Cell></th>
                <th><Cell $justify="flex-end" $thin>TIE</Cell></th>
                <th><Cell $justify="flex-end" $r={3} $color="#c97a12" $thin>VERKAUF</Cell></th>
                <th><Cell $justify="flex-end" $r={4} $color="#0f9fbe" $thin>KAUF</Cell></th>
              </tr>
            </thead>
            <tbody>{products.map((p) => <ProductRow key={p[0]} data={p} />)}</tbody>
          </Table>
        </TableClip>
        <VBar />
      </TableScroll>
      <HBar />
      <TableFoot />
    </TableWindow>
  );
}

export default function App() {
  return (
    <>
      <Global />
      <Desktop>
        <PlatformWindow />
        <CandleChart />
        <IndexGrid />
        <ProductTable />
      </Desktop>
    </>
  );
}
